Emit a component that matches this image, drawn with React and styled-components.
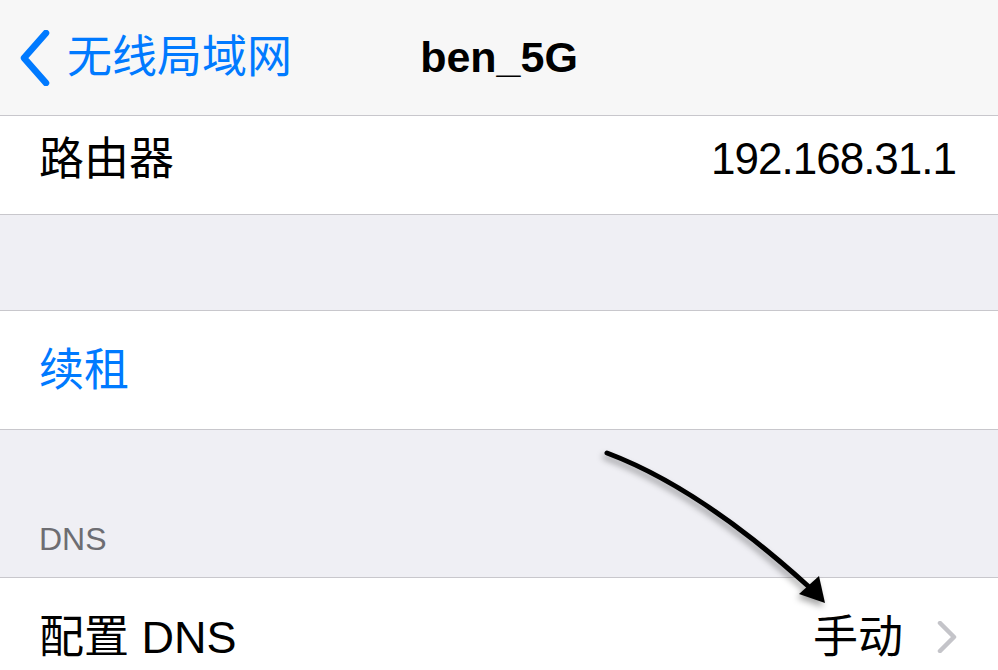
import React from 'react';
import styled, { createGlobalStyle } from 'styled-components';

const GlobalStyle = createGlobalStyle`
  html, body {
    margin: 0;
    padding: 0;
    background: #efeff4;
    overflow: hidden;
  }
  body {
    font-family: "Liberation Sans", "Noto Sans CJK SC", sans-serif;
    -webkit-font-smoothing: antialiased;
  }
`;

const blue = '#007aff';
const hairline = '#c8c7cc';

const Screen = styled.div`
  position: relative;
  width: 998px;
  height: 670px;
  overflow: hidden;
  background: #efeff4;
`;

const NavBar = styled.header`
  height: 115px;
  display: grid;
  grid-template-columns: 1fr auto 1fr;
  align-items: center;
  background: #f7f7f7;
  border-bottom: 1px solid ${hairline};
`;

const BackButton = styled.div`
  display: flex;
  align-items: center;
  gap: 17px;
  padding-left: 20px;
  color: ${blue};
  font-size: 45px;
  line-height: 1;
`;

const Title = styled.h1`
  margin: 0;
  font-size: 43px;
  font-weight: 700;
  color: #000;
  line-height: 1;
`;

const Row = styled.div`
  height: ${(p) => p.$height}px;
  padding: 0 ${(p) => p.$right || 41}px ${(p) => p.$bottom || 0}px 39px;
  box-sizing: border-box;
  display: flex;
  align-items: center;
  justify-content: space-between;
  background: #fff;
  border-bottom: 1px solid ${hairline};
  font-size: 45px;
  line-height: 1;
  color: #000;
`;

const Label = styled.span`
  color: ${(p) => (p.$action ? blue : '#000')};
`;

const Value = styled.span`
  display: flex;
  align-items: center;
  gap: 34px;
  letter-spacing: ${(p) => (p.$tight ? '-1px' : '0')};
  font-size: ${(p) => (p.$tight ? '44px' : '45px')};
`;

const Gap = styled.div`
  height: ${(p) => p.$height}px;
  box-sizing: border-box;
  border-bottom: 1px solid ${hairline};
  display: flex;
  align-items: flex-end;
  padding: 0 39px 22px;
`;

const SectionTitle = styled.span`
  font-size: 32px;
  line-height: 1;
  color: #6d6d72;
`;

const Annotation = styled.svg`
  position: absolute;
  left: 0;
  top: 0;
  pointer-events: none;
`;

const BackChevron = () => (
  <svg width="30" height="56" viewBox="0 0 30 56">
    <polyline
      points="26,3 4,28 26,53"
      fill="none"
      stroke={blue}
      strokeWidth="6.5"
      strokeLinecap="round"
      strokeLinejoin="round"
    />
  </svg>
);

const Disclosure = () => (
  <svg width="20" height="32" viewBox="0 0 20 32">
    <polyline
      points="3,2 17,16 3,30"
      fill="none"
      stroke="#c4c4c9"
      strokeWidth="4.5"
      strokeLinecap="round"
      strokeLinejoin="round"
    />
  </svg>
);

export default function App() {
  return (
    <Screen>
      <GlobalStyle />
      <NavBar>
        <BackButton>
          <BackChevron />
          <span>无线局域网</span>
        </BackButton>
        <Title>ben_5G</Title>
        <div />
      </NavBar>

      <Row $height={99} $bottom={12} $right={42}>
        <Label>路由器</Label>
        <Value $tight>192.168.31.1</Value>
      </Row>

      <Gap $height={96} />

      <Row $height={119}>
        <Label $action>续租</Label>
      </Row>

      <Gap $height={148}>
        <SectionTitle>DNS</SectionTitle>
      </Gap>

      <Row $height={119}>
        <Label>配置 DNS</Label>
        <Value>
          手动
          <Disclosure />
        </Value>
      </Row>

      <Annotation width="998" height="670" viewBox="0 0 998 670">
        <defs>
          <filter id="shadow" x="-20%" y="-20%" width="140%" height="140%">
            <feDropShadow dx="-2" dy="4" stdDeviation="3" floodColor="#000" floodOpacity="0.35" />
          </filter>
        </defs>
        <g filter="url(#shadow)">
          <path
            d="M607 453 Q 700 488 808 586"
            fill="none"
            stroke="#000"
            strokeWidth="5"
            strokeLinecap="round"
          />
          <polygon points="825,603 799,594 819,576" fill="#000" />
        </g>
      </Annotation>
    </Screen>
  );
}
